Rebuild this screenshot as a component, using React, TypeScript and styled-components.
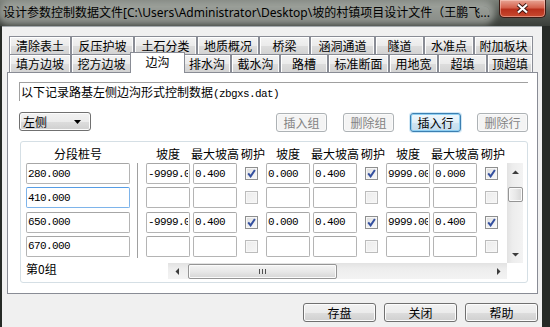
import styled, { createGlobalStyle } from 'styled-components'

const UI = `'Noto Sans CJK SC', 'Noto Sans', sans-serif`
const MONO = `'Liberation Mono', 'DejaVu Sans Mono', monospace`

const GlobalStyle = createGlobalStyle`
	* { box-sizing: border-box; }
	html, body { margin: 0; padding: 0; }
	body {
		background: #262a26;
		font-family: ${UI};
		font-size: 12px;
		color: #000;
	}
`

type TabItem = { label: string; w: number; active?: boolean }

const topTabs: TabItem[] = [
	{ label: '清除表土', w: 62 },
	{ label: '反压护坡', w: 63 },
	{ label: '土石分类', w: 63 },
	{ label: '地质概况', w: 62 },
	{ label: '桥梁', w: 51 },
	{ label: '涵洞通道', w: 65 },
	{ label: '隧道', w: 49 },
	{ label: '水准点', w: 50 },
	{ label: '附加板块', w: 59 },
]

const bottomTabs: TabItem[] = [
	{ label: '填方边坡', w: 62 },
	{ label: '挖方边坡', w: 61 },
	{ label: '边沟', w: 51, active: true },
	{ label: '排水沟', w: 48 },
	{ label: '截水沟', w: 49 },
	{ label: '路槽', w: 48 },
	{ label: '标准断面', w: 61 },
	{ label: '用地宽', w: 49 },
	{ label: '超填', w: 49 },
	{ label: '顶超填', w: 46 },
]

type Group = { slope: string; height: string; guard: boolean }
type Row = { station: string; focused?: boolean; groups: Group[] }

const empty: Group = { slope: '', height: '', guard: false }

const rows: Row[] = [
	{
		station: '280.000',
		groups: [
			{ slope: '-9999.000', height: '0.400', guard: true },
			{ slope: '0.000', height: '0.400', guard: true },
			{ slope: '9999.000', height: '0.000', guard: true },
		],
	},
	{ station: '410.000', focused: true, groups: [empty, empty, empty] },
	{
		station: '650.000',
		groups: [
			{ slope: '-9999.000', height: '0.400', guard: true },
			{ slope: '0.000', height: '0.400', guard: true },
			{ slope: '9999.000', height: '0.400', guard: true },
		],
	},
	{ station: '670.000', groups: [empty, empty, empty] },
]

const TITLE =
	'设计参数控制数据文件[C:\\Users\\Administrator\\Desktop\\坡的村镇项目设计文件（王鹏飞...'

function Arrow({ dir }: { dir: 'up' | 'down' | 'left' | 'right' }) {
	const pts = {
		up: '0,4 3.5,0.5 7,4',
		down: '0,0 3.5,3.5 7,0',
		left: '4,0 0.5,3.5 4,7',
		right: '0,0 3.5,3.5 0,7',
	}[dir]
	const vertical = dir === 'up' || dir === 'down'
	return (
		<svg width={vertical ? 7 : 4} height={vertical ? 4 : 7} viewBox={vertical ? '0 0 7 4' : '0 0 4 7'}>
			<polygon points={pts} fill='#3c3c3c' />
		</svg>
	)
}

function Check({ checked }: { checked: boolean }) {
	return (
		<CheckBox $checked={checked}>
			{checked && (
				<svg width='9' height='9' viewBox='0 0 9 9'>
					<path d='M1.2 4.4 L3.6 7.4 L7.9 1' fill='none' stroke='#34509f' strokeWidth='2' />
				</svg>
			)}
		</CheckBox>
	)
}

export default function App() {
	return (
		<>
			<GlobalStyle />
			<Window>
				<TitleBar>
					<TitleText>{TITLE}</TitleText>
					<CloseButton>
						<svg width='13' height='11' viewBox='0 0 13 11'>
							<path d='M2 1.5 L11 9.5 M11 1.5 L2 9.5' stroke='#3a1410' strokeWidth='4' />
							<path d='M2 1.5 L11 9.5 M11 1.5 L2 9.5' stroke='#fff' strokeWidth='2.2' />
						</svg>
					</CloseButton>
				</TitleBar>

				<Frame>
					<Client>
						<TabRow>
							{topTabs.map((t) => (
								<Tab key={t.label} $w={t.w}>
									{t.label}
								</Tab>
							))}
						</TabRow>
						<TabRow>
							{bottomTabs.map((t) =>
								t.active ? (
									<ActiveTab key={t.label} $w={t.w}>
										{t.label}
									</ActiveTab>
								) : (
									<Tab key={t.label} $w={t.w}>
										{t.label}
									</Tab>
								),
							)}
						</TabRow>

						<Panel>
							<Caption>
								以下记录路基左侧边沟形式控制数据<Mono>(zbgxs.dat)</Mono>
							</Caption>

							<Toolbar>
								<Combo>
									<span>左侧</span>
									<svg width='7' height='4' viewBox='0 0 7 4'>
										<polygon points='0,0 7,0 3.5,4' fill='#000' />
									</svg>
								</Combo>
								<ButtonGroup>
									<PushButton $variant='disabled'>插入组</PushButton>
									<PushButton $variant='disabled'>删除组</PushButton>
									<PushButton $variant='focused'>插入行</PushButton>
									<PushButton $variant='disabled'>删除行</PushButton>
								</ButtonGroup>
							</Toolbar>

							<GroupBox>
								<TopArea>
									<StationCol>
										<HeaderCell>分段桩号</HeaderCell>
										<RowStack>
											{rows.map((r) => (
												<Field key={r.station} $w={104} $focused={r.focused} readOnly value={r.station} />
											))}
										</RowStack>
									</StationCol>

									<Divider />

									<DataArea>
										<DataRow $header>
											{[0, 1, 2].map((i) => (
												<GroupCells key={i}>
													<HeaderCell $w={44}>坡度</HeaderCell>
													<HeaderCell $w={50}>最大坡高</HeaderCell>
													<HeaderCell $w={26}>砌护</HeaderCell>
												</GroupCells>
											))}
										</DataRow>
										<RowStack>
											{rows.map((r) => (
												<DataRow key={r.station}>
													{r.groups.map((g, i) => (
														<GroupCells key={i}>
															<Field $w={44} readOnly value={g.slope} />
															<Field $w={44} $gap readOnly value={g.height} />
															<CheckCell>
																<Check checked={g.guard} />
															</CheckCell>
														</GroupCells>
													))}
												</DataRow>
											))}
										</RowStack>
									</DataArea>

									<VScroll>
										<ScrollArrow>
											<Arrow dir='up' />
										</ScrollArrow>
										<VThumb />
										<Spacer />
										<ScrollArrow>
											<Arrow dir='down' />
										</ScrollArrow>
									</VScroll>
								</TopArea>

								<Footer>
									<FooterLabel>第0组</FooterLabel>
									<HScroll>
										<ScrollArrow $horizontal>
											<Arrow dir='left' />
										</ScrollArrow>
										<HThumb>
											<svg width='7' height='5' viewBox='0 0 7 5'>
												<path d='M0.5 0 V5 M3.5 0 V5 M6.5 0 V5' stroke='#505050' strokeWidth='1' />
											</svg>
										</HThumb>
										<Spacer />
										<ScrollArrow $horizontal>
											<Arrow dir='right' />
										</ScrollArrow>
									</HScroll>
								</Footer>
							</GroupBox>
						</Panel>

						<ButtonBar>
							<PushButton $variant='normal' $wide>存盘</PushButton>
							<PushButton $variant='normal' $wide>关闭</PushButton>
							<PushButton $variant='normal' $wide>帮助</PushButton>
						</ButtonBar>
					</Client>
				</Frame>
			</Window>
		</>
	)
}

const Window = styled.div`
	width: 550px;
	height: 327px;
	display: flex;
	flex-direction: column;
	overflow: hidden;
	background: #262a26;
`

const TitleBar = styled.div`
	height: 26px;
	flex-shrink: 0;
	display: flex;
	align-items: flex-start;
	background: linear-gradient(180deg, #7b8079 0%, #565b55 45%, #3a3e39 100%);
`

const TitleText = styled.div`
	margin: 6px 0 0 3px;
	font-family: 'Noto Sans', 'Noto Sans CJK SC', sans-serif;
	font-size: 12px;
	line-height: 14px;
	white-space: nowrap;
	color: #000;
	background: rgba(196, 200, 194, 0.55);
	border-radius: 7px;
	box-shadow: 0 0 6px 5px rgba(196, 200, 194, 0.55);
`

const CloseButton = styled.div`
	margin: 0 4px 0 auto;
	width: 47px;
	height: 18px;
	display: flex;
	align-items: center;
	justify-content: center;
	border: 1px solid #3b1a14;
	border-top: none;
	border-radius: 0 0 5px 5px;
	background: linear-gradient(180deg, #e8a595 0%, #d4614c 45%, #b8301c 55%, #c84a30 100%);
	box-shadow: inset 0 0 0 1px rgba(255, 220, 210, 0.45);
`

const Frame = styled.div`
	flex: 1;
	display: flex;
	padding: 0 8px 0 2px;
`

const Client = styled.div`
	flex: 1;
	display: flex;
	flex-direction: column;
	background: #f0f0f0;
	border-top: 1px solid #a3a9ad;
	padding: 9px 4px 0 5px;
`

const TabRow = styled.div`
	display: flex;
	height: 18px;
	margin-left: 2px;
`

const Tab = styled.div<{ $w: number }>`
	width: ${(p) => p.$w}px;
	height: 18px;
	flex-shrink: 0;
	display: flex;
	align-items: center;
	justify-content: center;
	border: 1px solid #898c95;
	border-bottom: none;
	background: linear-gradient(180deg, #f3f3f3 0%, #ebebeb 50%, #dddddd 51%, #d3d3d3 100%);
	box-shadow: inset 1px 1px 0 #fff, inset -1px 0 0 #fafafa;
	font-size: 12px;
	line-height: 12px;
	padding-top: 1px;
	white-space: nowrap;
`

const ActiveTab = styled(Tab)`
	width: ${(p) => p.$w + 4}px;
	height: 21px;
	margin: -2px -2px -1px;
	background: #fff;
	box-shadow: none;
	align-items: flex-start;
	padding-top: 3px;
	position: relative;
	z-index: 1;
`

const Panel = styled.div`
	height: 222px;
	display: flex;
	flex-direction: column;
	border: 1px solid #898c95;
	background: #fff;
	padding: 9px 9px 10px 11px;
`

const Caption = styled.div`
	height: 19px;
	flex-shrink: 0;
	border-top: 1px solid #a0a0a0;
	border-left: 1px solid #a0a0a0;
	padding: 2px 0 0 1px;
	line-height: 14px;
	white-space: nowrap;
`

const Mono = styled.span`
	font-family: ${MONO};
	font-size: 11px;
	letter-spacing: -0.6px;
`

const Toolbar = styled.div`
	display: flex;
	align-items: flex-start;
	height: 20px;
	margin-top: 11px;
`

const Combo = styled.div`
	width: 72px;
	height: 19px;
	display: flex;
	align-items: center;
	justify-content: space-between;
	padding: 0 9px 0 3px;
	border: 1px solid #707070;
	border-radius: 3px;
	background: linear-gradient(180deg, #f2f2f2 0%, #ebebeb 50%, #dddddd 51%, #cfcfcf 100%);
	box-shadow: inset 0 0 0 1px #fcfcfc;
	line-height: 12px;
`

const ButtonGroup = styled.div`
	display: flex;
	gap: 16px;
	margin: 1px 0 0 auto;
`

type Variant = 'normal' | 'disabled' | 'focused'

const buttonSkins: Record<Variant, string> = {
	normal: `
		border-color: #707070;
		color: #000;
		background: linear-gradient(180deg, #f2f2f2 0%, #ebebeb 50%, #dddddd 51%, #cfcfcf 100%);
		box-shadow: inset 0 0 0 1px #fcfcfc;
	`,
	disabled: `
		border-color: #adb2b5;
		color: #838383;
		background: #f4f4f4;
		box-shadow: inset 0 0 0 1px #fafafa;
	`,
	focused: `
		border-color: #3c7fb1;
		color: #000;
		background: linear-gradient(180deg, #eef7fc 0%, #e0eef7 50%, #cfe4f2 51%, #c5dcec 100%);
		box-shadow: inset 0 0 0 1px #8ecff2, 0 0 0 1px rgba(120, 190, 230, 0.35);
	`,
}

const PushButton = styled.div<{ $variant: Variant; $wide?: boolean }>`
	width: ${(p) => (p.$wide ? 73 : 51)}px;
	height: 19px;
	display: flex;
	align-items: center;
	justify-content: center;
	border: 1px solid;
	border-radius: 3px;
	font-size: 12px;
	line-height: 12px;
	${(p) => buttonSkins[p.$variant]}
`

const GroupBox = styled.div`
	height: 142px;
	margin: 9px 0 0 1px;
	display: flex;
	flex-direction: column;
	border: 1px solid #d5dfe5;
	border-radius: 3px;
`

const TopArea = styled.div`
	height: 121px;
	display: flex;
	padding: 6px 0 0 5px;
`

const StationCol = styled.div`
	width: 104px;
	display: flex;
	flex-direction: column;
`

const HeaderCell = styled.div<{ $w?: number }>`
	${(p) => (p.$w ? `width: ${p.$w}px; flex-shrink: 0;` : '')}
	height: 15px;
	line-height: 12px;
	text-align: center;
	white-space: nowrap;
`

const RowStack = styled.div`
	display: flex;
	flex-direction: column;
	gap: 3.3px;
`

const Field = styled.input<{ $w: number; $focused?: boolean; $gap?: boolean }>`
	width: ${(p) => p.$w}px;
	height: 21px;
	flex-shrink: 0;
	margin: 0 0 0 ${(p) => (p.$gap ? 3 : 0)}px;
	padding: 0 1px;
	border: 1px solid ${(p) => (p.$focused ? '#7eb4ea' : '#b4b4b4')};
	border-top-color: ${(p) => (p.$focused ? '#569de5' : '#a6a6a6')};
	border-radius: 2px;
	background: #fff;
	color: #000;
	font-family: ${MONO};
	font-size: 11px;
	letter-spacing: -0.6px;
	outline: none;
`

const Divider = styled.div`
	width: 1px;
	height: 95px;
	margin: 15px 0 0 7px;
	background: #a0a0a0;
	flex-shrink: 0;
`

const DataArea = styled.div`
	width: 360px;
	margin-left: 8px;
	display: flex;
	flex-direction: column;
`

const DataRow = styled.div<{ $header?: boolean }>`
	display: flex;
	height: ${(p) => (p.$header ? 15 : 21)}px;
`

const GroupCells = styled.div`
	width: 120px;
	display: flex;
	flex-shrink: 0;
`

const CheckCell = styled.div`
	width: 29px;
	display: flex;
	align-items: center;
	justify-content: center;
`

const CheckBox = styled.span<{ $checked: boolean }>`
	width: 13px;
	height: 13px;
	display: flex;
	align-items: center;
	justify-content: center;
	border: 1px solid ${(p) => (p.$checked ? '#8e8f8f' : '#bcbcbc')};
	background: ${(p) =>
		p.$checked
			? 'linear-gradient(135deg, #dcdcdc 0%, #f0f0f0 60%, #fbfbfb 100%)'
			: 'linear-gradient(135deg, #ececec 0%, #f6f6f6 100%)'};
	box-shadow: inset 0 0 0 1px #f7f7f7;
`

const VScroll = styled.div`
	width: 16px;
	height: 100px;
	margin: 15px 0 0 1px;
	display: flex;
	flex-direction: column;
	align-items: center;
	background: linear-gradient(90deg, #e2e2e2 0%, #ededed 35%, #f3f3f3 100%);
`

const ScrollArrow = styled.div<{ $horizontal?: boolean }>`
	width: ${(p) => (p.$horizontal ? 17 : 16)}px;
	height: ${(p) => (p.$horizontal ? 16 : 17)}px;
	flex-shrink: 0;
	display: flex;
	align-items: center;
	justify-content: center;
`

const VThumb = styled.div`
	width: 15px;
	height: 15px;
	margin-top: 7px;
	border: 1px solid #959595;
	border-radius: 2px;
	background: linear-gradient(90deg, #f4f4f4 0%, #e8e8e8 50%, #d6d6d6 100%);
	box-shadow: inset 0 0 0 1px #fbfbfb;
`

const Spacer = styled.div`
	flex: 1;
`

const Footer = styled.div`
	height: 16px;
	display: flex;
	padding-left: 5px;
`

const FooterLabel = styled.div`
	width: 142px;
	line-height: 12px;
	padding-top: 0;
`

const HScroll = styled.div`
	width: 339px;
	height: 16px;
	display: flex;
	align-items: center;
	background: linear-gradient(180deg, #e2e2e2 0%, #ededed 35%, #f3f3f3 100%);
`

const HThumb = styled.div`
	width: 149px;
	height: 15px;
	margin-left: 3px;
	display: flex;
	align-items: center;
	justify-content: center;
	border: 1px solid #959595;
	border-radius: 2px;
	background: linear-gradient(180deg, #f4f4f4 0%, #e8e8e8 50%, #d6d6d6 100%);
	box-shadow: inset 0 0 0 1px #fbfbfb;
`

const ButtonBar = styled.div`
	display: flex;
	justify-content: flex-end;
	gap: 8px;
	margin-top: 9px;
`
